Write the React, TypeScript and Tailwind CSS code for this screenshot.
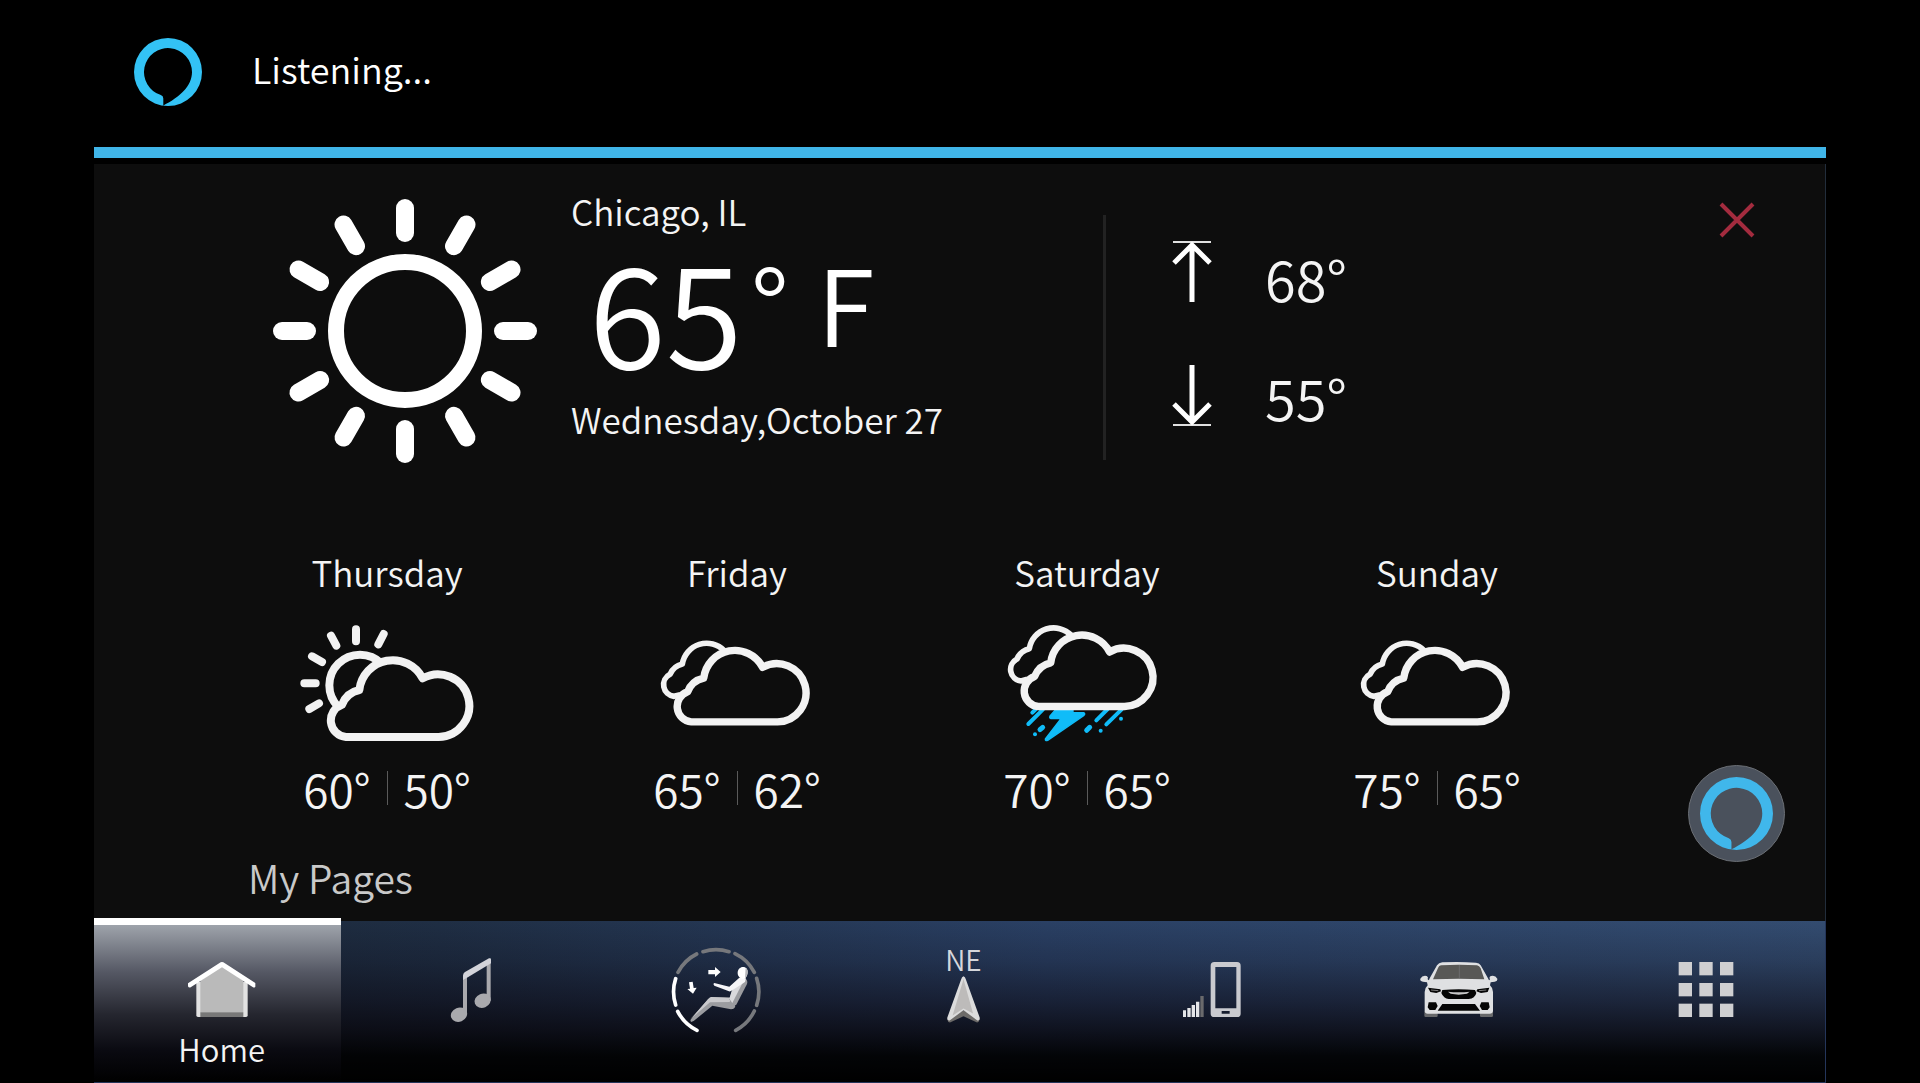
import type { ReactNode } from "react";

const PANEL = "#0d0d0d";

function AssistantRing({ className }: { className: string }) {
  return (
    <svg viewBox="0 0 68 68" className={className} aria-hidden="true">
      <path
        fill="currentColor"
        fillRule="evenodd"
        d="M34 0A34 34 0 1 1 34 68A34 34 0 1 1 34 0ZM29.3 67.4V60.5Q29.3 57.9 26.8 57A24 24 0 1 1 58 34C58 48 46 59 29.3 67.4Z"
      />
    </svg>
  );
}

function SunIcon() {
  return (
    <svg viewBox="0 0 264 264" className="size-[264px] shrink-0" role="img" aria-label="Sunny">
      <circle cx="132" cy="132" r="69" fill="none" stroke="#fff" strokeWidth="16" />
      {Array.from({ length: 12 }, (_, i) => (
        <rect key={i} x="123" y="0" width="18" height="43" rx="9" fill="#fff" transform={`rotate(${i * 30} 132 132)`} />
      ))}
    </svg>
  );
}

function FrontCloud() {
  return (
    <path
      d="M258 591H536A94 94 0 1 0 488 415A101 101 0 0 0 298 450A72 72 0 0 0 246 494A50 50 0 0 0 258 591Z"
      fill={PANEL}
      stroke="#f2f2f2"
      strokeWidth="24"
      strokeLinejoin="round"
    />
  );
}

function CloudPair() {
  return (
    <>
      <path
        d="M322 332A74 74 0 0 0 196 372A54 54 0 0 0 159 403A35 35 0 0 0 171 469L190 464"
        fill="none"
        stroke="#f2f2f2"
        strokeWidth="17"
        strokeLinejoin="round"
      />
      <g transform="translate(-17 -4) scale(.93)">
        <FrontCloud />
      </g>
    </>
  );
}

type Sky = "partly" | "cloudy" | "storm";

function SkyIcon({ sky }: { sky: Sky }) {
  if (sky === "partly") {
    return (
      <svg viewBox="120 255 522 351" className="h-[117px] w-[174px]" role="img" aria-label="Partly cloudy">
        <g fill="none" stroke="#f2f2f2" strokeWidth="24" strokeLinecap="round">
          <circle cx="300" cy="436" r="92" />
          <path d="M288 268V304M371 282L355 313M213 287L229 317M156 349L186 366M133 430H167M148 507L177 490" />
        </g>
        <FrontCloud />
      </svg>
    );
  }
  if (sky === "cloudy") {
    return (
      <svg viewBox="99 255 522 351" className="h-[117px] w-[174px]" role="img" aria-label="Cloudy">
        <CloudPair />
      </svg>
    );
  }
  return (
    <svg viewBox="93 255 522 351" className="h-[117px] w-[174px]" role="img" aria-label="Thunderstorm">
      <g stroke="#10bcf8" strokeLinecap="round" fill="#10bcf8">
        <path
          strokeWidth="12"
          d="M190 518L200 508M178 552L222 508M382 541L416 507M412 553L458 508"
        />
        <path strokeWidth="15" d="M213 569L221 562M353 571L362 562" />
        <path strokeWidth="4" strokeLinejoin="round" d="M260 508H312V518H344Q350 521 345 526L236 601Q228 604 229 597L273 540V536H246Q240 534 243 528Z" />
        <g stroke="none">
          <circle cx="198" cy="583" r="6" />
          <circle cx="395" cy="572" r="6" />
          <circle cx="456" cy="536" r="6" />
        </g>
      </g>
      <g transform="translate(-15 -46)">
        <CloudPair />
      </g>
    </svg>
  );
}

const forecast: { day: string; sky: Sky; high: number; low: number }[] = [
  { day: "Thursday", sky: "partly", high: 60, low: 50 },
  { day: "Friday", sky: "cloudy", high: 65, low: 62 },
  { day: "Saturday", sky: "storm", high: 70, low: 65 },
  { day: "Sunday", sky: "cloudy", high: 75, low: 65 },
];

function LimitArrow({ low = false }: { low?: boolean }) {
  return (
    <svg
      viewBox="0 0 40 62"
      className={low ? "h-[62px] w-10 rotate-180" : "h-[62px] w-10"}
      role="img"
      aria-label={low ? "Low" : "High"}
    >
      <path d="M1 1H39" stroke="#e0e0e0" strokeWidth="2" />
      <path d="M20 5V61M2 22L20 4L38 22" fill="none" stroke="#fff" strokeWidth="5" />
    </svg>
  );
}

function NavIcon({ x, y, children }: { x: number; y: number; children: ReactNode }) {
  return (
    <svg viewBox={`${x} ${y} 300 270`} className="h-[90px] w-[100px]" aria-hidden="true">
      {children}
    </svg>
  );
}

function HouseIcon() {
  return (
    <NavIcon x={272} y={285}>
      <path d="M345 396H499V496Q499 501 494 501H350Q345 501 345 496Z" fill="#e2e2e2" />
      <path d="M357 392L422 346L486 392V487H357Z" fill="#bababa" />
      <path d="M357 487H486V501H357Z" fill="#787878" />
      <path d="M320 400L418 337Q422 335 426 337L522 399V410Q519 414 515 412L422 352L328 412Q322 414 320 409Z" fill="#fff" />
    </NavIcon>
  );
}

function MusicIcon() {
  return (
    <NavIcon x={1014} y={285}>
      <path d="M1146 380H1158V494H1146ZM1217 335H1229V452H1217Z" fill="#a9a9ad" />
      <ellipse cx="1134" cy="494" rx="25" ry="21" fill="#a9a9ad" transform="rotate(-22 1134 494)" />
      <ellipse cx="1205" cy="452" rx="25" ry="21" fill="#a9a9ad" transform="rotate(-22 1205 452)" />
      <path d="M1146 376Q1147 369 1152 366L1224 325Q1230 323 1230 328V340L1158 383L1146 390Z" fill="#d3d4da" />
    </NavIcon>
  );
}

function ClimateIcon() {
  return (
    <NavIcon x={77} y={105}>
      <g fill="none" strokeWidth="11" strokeLinecap="round">
        <path
          stroke="#76787c"
          d="M188 125A128 128 0 0 1 266 125M113 187A128 128 0 0 1 169 132M284 131A128 128 0 0 1 342 187M349 205A128 128 0 0 1 349 286M342 303A128 128 0 0 1 286 361"
        />
        <path stroke="#fff" d="M106 206A128 128 0 0 0 106 285M112 304A128 128 0 0 0 170 361" />
      </g>
      <path fill="#fff" d="M204 180H224V171L241 186L224 201V193H204ZM146 217L157 215L160 234L169 233L158 251L141 237L149 236Z" />
      <path fill="#9b9ca0" d="M272 263L213 261Q208 262 203 268L150 330L152 336L160 333L216 287L272 298Q283 298 285 288Z" />
      <path fill="#c9c9cc" d="M272 263L213 261Q208 262 203 268L150 328L209 277L268 276Z" />
      <path fill="#9b9ca0" d="M316 206Q323 212 320 222L288 284L280 288L267 268L276 240L300 214Z" />
      <path fill="#d9d9dc" d="M303 211L274 243L267 266L276 279L307 218Z" />
      <path fill="#f6f6f8" d="M297 203L267 230L222 219Q217 221 222 227L266 244Q271 245 276 241L314 216L317 205L309 204Z" />
      <path fill="#fff" d="M308 171C318 171 323 178 322 188C321 198 315 207 308 207C300 207 291 199 292 187C293 178 299 171 308 171Z" />
      <path fill="#b5b6ba" d="M316 174Q323 179 322 188Q320 199 314 204Z" />
    </NavIcon>
  );
}

function CompassIcon() {
  return (
    <div className="flex h-[90px] flex-col items-center">
      <span className="text-[28px] leading-7 text-[#d5d7dc]">NE</span>
      <svg viewBox="920 197 100 141" className="mt-[3px] h-[47px] w-[33px]" aria-hidden="true">
        <path d="M970 300L1019 328Q1017 336 1011 337L970 318L929 337Q922 336 921 328Z" fill="#6d6b69" />
        <path d="M970 197Q975 198 977 206L1019 322Q1021 332 1012 331L970 300L928 331Q919 332 921 322L963 206Q965 198 970 197Z" fill="#dcdcdc" />
        <path d="M970 206L999 310L970 295L937 316Z" fill="#bdbbba" />
      </svg>
    </div>
  );
}

function PhoneIcon() {
  return (
    <NavIcon x={31} y={105}>
      <path
        fill="#c9cacf"
        fillRule="evenodd"
        d="M191 156H259Q270 156 270 167V311Q270 321 259 321H191Q180 321 180 311V167Q180 156 191 156ZM194 171V295H257V171ZM213 303V311H237V303Z"
      />
      <path fill="#e4e5e8" d="M97 301H106V321H97ZM110 294H120V321H110ZM123 285H133V321H123ZM136 275H146V321H136Z" />
      <path fill="#6a6a6c" d="M149 258H159V321H149Z" />
    </NavIcon>
  );
}

function CarIcon() {
  return (
    <NavIcon x={773} y={105}>
      <path fill="#68696b" d="M822 304H862V318Q862 321 858 321H826Q822 321 822 317ZM989 304H1028V317Q1028 321 1024 321H993Q989 321 989 318Z" />
      <path
        fill="#dfe0e2"
        d="M876 157Q926 154 977 158Q987 159 991 166L1013 205Q1016 214 1019 208Q1015 201 1022 198Q1035 195 1041 206Q1042 213 1033 215L1021 217L1019 226Q1028 234 1028 246V303Q1027 311 1018 311H832Q824 311 823 303V246Q823 234 832 226L830 217L818 215Q808 213 810 206Q816 195 829 198Q835 201 832 208Q836 214 838 205L860 166Q865 158 876 157Z"
      />
      <path fill="#585856" d="M872 166Q926 163 980 166Q987 168 991 175L1002 208Q926 204 848 208L863 174Q866 167 872 166Z" />
      <path stroke="#77777a" strokeWidth="2" d="M927 165V205" />
      <path
        fill="#050505"
        d="M876 240Q925 236 974 240L978 249Q974 266 955 267H895Q880 266 873 249ZM833 233L870 238L872 244L858 249L840 246ZM1017 233L981 238L978 244L992 249L1012 246ZM835 277H857L862 288L855 300H838L832 292ZM1015 277H993L988 288L995 300H1012L1018 292ZM876 282H974L989 302H862Z"
      />
      <path fill="#c8c8c8" d="M893 245Q925 249 958 245L950 251L925 254L901 251Z" />
      <path fill="none" stroke="#b5b5b5" strokeWidth="2" d="M842 240L864 242M1008 240L986 242" />
    </NavIcon>
  );
}

function AppsIcon() {
  return (
    <NavIcon x={165} y={135}>
      {[186, 249, 311].map((y) =>
        [236, 298, 360].map((x) => <rect key={`${x}-${y}`} x={x} y={y} width="40" height="40" fill="#cfcfd1" />)
      )}
    </NavIcon>
  );
}

const tabs: { name: string; icon: ReactNode }[] = [
  { name: "Media", icon: <MusicIcon /> },
  { name: "Comfort", icon: <ClimateIcon /> },
  { name: "Navigation", icon: <CompassIcon /> },
  { name: "Phone", icon: <PhoneIcon /> },
  { name: "Vehicle", icon: <CarIcon /> },
  { name: "Apps", icon: <AppsIcon /> },
];

export default function App() {
  return (
    <div className="flex min-h-screen flex-col bg-black px-[94px] font-['Noto_Sans_CJK_SC','Noto_Sans',sans-serif] font-[350] text-[#f4f4f4]">
      <header className="flex h-[147px] items-start gap-[50px] pt-[38px] pl-10">
        <AssistantRing className="size-[68px] text-[#33c2f5]" />
        <p className="pt-1.5 text-[36px] leading-12 text-white">Listening...</p>
      </header>
      <div className="h-[11px] bg-[#40b5e8]" />

      <main className="relative mt-1.5 flex flex-1 flex-col border-r border-[#222d3b] bg-[#0d0d0d]">
        <section className="flex items-start pt-[35px] pl-[179px]">
          <SunIcon />
          <div className="ml-[34px] w-[532px]">
            <h1 className="-mt-3 text-[35px] leading-12">Chicago, IL</h1>
            <p className="flex h-40 items-start pl-[18px] text-white">
              <span className="text-[140px] leading-[146px]">65</span>
              <span className="ml-2 text-[105px] leading-[132px]">°</span>
              <span className="ml-7 text-[105px] leading-[132px]">F</span>
            </p>
            <p className="text-[35px] leading-12">Wednesday,October 27</p>
          </div>
          <div className="mt-4 h-[245px] w-[3px] bg-[#222222]" />
          <dl className="mt-[42px] ml-[66px] grid grid-cols-[40px_auto] gap-x-[53px] gap-y-[55px]">
            <dt>
              <LimitArrow />
            </dt>
            <dd className="pt-1.5 text-[56px] leading-[62px]">68°</dd>
            <dt>
              <LimitArrow low />
            </dt>
            <dd className="pt-0.5 text-[56px] leading-[62px]">55°</dd>
          </dl>
        </section>

        <button type="button" aria-label="Close" className="absolute top-9 right-[68px] size-10 text-[#a32b3e]">
          <svg viewBox="0 0 40 40" className="size-10" aria-hidden="true">
            <path d="M4 4L36 36M36 4L4 36" stroke="currentColor" strokeWidth="4" />
          </svg>
        </button>

        <ul className="mt-[85px] grid grid-cols-4 pr-[213px] pl-[118px]">
          {forecast.map((f) => (
            <li key={f.day} className="flex flex-col items-center">
              <h2 className="text-[35px] leading-12">{f.day}</h2>
              <div className="pt-[29px] pb-4">
                <SkyIcon sky={f.sky} />
              </div>
              <p className="flex items-center gap-4 text-[46px] leading-[60px]">
                <span>{f.high}°</span>
                <span className="h-[34px] w-px bg-[#5a5a5a]" />
                <span>{f.low}°</span>
              </p>
            </li>
          ))}
        </ul>

        <h2 className="mt-auto mb-4 pl-[154px] text-[39px] leading-14 text-[#c9c9c9]">My Pages</h2>

        <button
          type="button"
          aria-label="Ask the assistant"
          className="absolute right-10 bottom-[59px] flex size-[97px] items-center justify-center rounded-full border border-[#6a6e74] bg-[#4a515c] text-[#40b7eb]"
        >
          <AssistantRing className="size-[73px]" />
        </button>
      </main>

      <nav className="relative grid h-[162px] grid-cols-7 border-r border-b border-[#24355a] bg-[linear-gradient(to_bottom,transparent,rgba(6,2,10,.2)_25%,rgba(8,4,12,.52)_50%,rgba(6,3,8,.74)_67%,rgba(0,0,0,.93)_84%,#000),linear-gradient(to_right,#1b2838,#1f2e44_20%,#2a4064_55%,#334c70)]">
        <button
          type="button"
          className="-mt-[3px] flex flex-col items-center border-t-[7px] border-t-white bg-[linear-gradient(to_bottom,#9ea3ab,#555864_30%,#25262f_57%,#0a0a11_80%,#000)] pt-5 pl-2"
        >
          <HouseIcon />
          <span className="text-[31px] leading-7">Home</span>
        </button>
        {tabs.map((t) => (
          <button key={t.name} type="button" aria-label={t.name} className="flex justify-center pt-6 pl-2">
            {t.icon}
          </button>
        ))}
      </nav>
    </div>
  );
}
